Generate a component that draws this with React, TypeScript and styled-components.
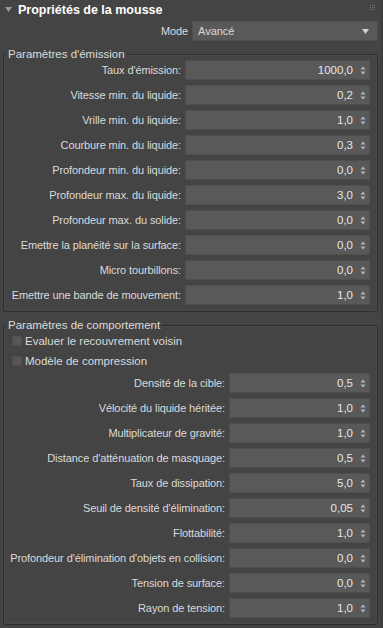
import React from "react";
import styled, { createGlobalStyle } from "styled-components";

const GlobalStyle = createGlobalStyle`
  html, body {
    margin: 0;
    padding: 0;
    background: #444444;
  }
  * {
    box-sizing: border-box;
  }
`;

const emission = [
  { label: "Taux d'émission:", value: "1000,0" },
  { label: "Vitesse min. du liquide:", value: "0,2" },
  { label: "Vrille min. du liquide:", value: "1,0" },
  { label: "Courbure min. du liquide:", value: "0,3" },
  { label: "Profondeur min. du liquide:", value: "0,0" },
  { label: "Profondeur max. du liquide:", value: "3,0" },
  { label: "Profondeur max. du solide:", value: "0,0" },
  { label: "Emettre la planéité sur la surface:", value: "0,0" },
  { label: "Micro tourbillons:", value: "0,0" },
  { label: "Emettre une bande de mouvement:", value: "1,0" },
];

const behaviour = [
  { label: "Densité de la cible:", value: "0,5" },
  { label: "Vélocité du liquide héritée:", value: "1,0" },
  { label: "Multiplicateur de gravité:", value: "1,0" },
  { label: "Distance d'atténuation de masquage:", value: "0,5" },
  { label: "Taux de dissipation:", value: "5,0" },
  { label: "Seuil de densité d'élimination:", value: "0,05" },
  { label: "Flottabilité:", value: "1,0" },
  { label: "Profondeur d'élimination d'objets en collision:", value: "0,0" },
  { label: "Tension de surface:", value: "0,0" },
  { label: "Rayon de tension:", value: "1,0" },
];

const checks = ["Evaluer le recouvrement voisin", "Modèle de compression"];

// petite flèche haut/bas du spinner
const SpinArrows = () => (
  <svg width="6" height="11" viewBox="0 0 6 11">
    <path d="M3 1.5 L5.5 4.5 L0.5 4.5 Z" fill="#b4b4b4" />
    <path d="M3 9.5 L5.5 6.5 L0.5 6.5 Z" fill="#b4b4b4" />
  </svg>
);

const Spinner: React.FC<{ value: string }> = ({ value }) => (
  <Field>
    <Value>{value}</Value>
    <SpinArrows />
  </Field>
);

const App: React.FC = () => {
  return (
    <Panel>
      <GlobalStyle />
      <Header>
        <svg width="7" height="5" viewBox="0 0 7 5">
          <path d="M0 0 L7 0 L3.5 5 Z" fill="#9a9a9a" />
        </svg>
        <Title>Propriétés de la mousse</Title>
        <Grip>
          {Array.from({ length: 9 }).map((_, i) => (
            <i key={i} />
          ))}
        </Grip>
      </Header>

      <ModeRow>
        <Label>Mode</Label>
        <Dropdown>
          <span>Avancé</span>
          <svg width="7" height="5" viewBox="0 0 7 5">
            <path d="M0 0 L7 0 L3.5 5 Z" fill="#d0d0d0" />
          </svg>
        </Dropdown>
      </ModeRow>

      <Group>
        <Legend>Paramètres d'émission</Legend>
        <Rows fieldWidth={185}>
          {emission.map((r) => (
            <React.Fragment key={r.label}>
              <Label>{r.label}</Label>
              <Spinner value={r.value} />
            </React.Fragment>
          ))}
        </Rows>
      </Group>

      <Group>
        <Legend>Paramètres de comportement</Legend>
        <Checks>
          {checks.map((c) => (
            <CheckRow key={c}>
              <Box />
              <span>{c}</span>
            </CheckRow>
          ))}
        </Checks>
        <Rows fieldWidth={141}>
          {behaviour.map((r) => (
            <React.Fragment key={r.label}>
              <Label>{r.label}</Label>
              <Spinner value={r.value} />
            </React.Fragment>
          ))}
        </Rows>
      </Group>
    </Panel>
  );
};

export default App;

// panneau complet
const Panel = styled.div`
  width: 383px;
  height: 628px;
  overflow: hidden;
  background: #444444;
  color: #dadada;
  font-family: "Liberation Sans", Arial, sans-serif;
  font-size: 11px;
  border-right: 2px solid #3c3c3c;
`;

// titre du rollout
const Header = styled.div`
  height: 19px;
  display: flex;
  align-items: center;
  padding-left: 5px;
  padding-right: 6px;
  gap: 6px;
`;

const Title = styled.span`
  font-weight: bold;
  font-size: 12.5px;
  color: #ffffff;
  flex: 1;
`;

const Grip = styled.div`
  display: grid;
  grid-template-columns: repeat(3, 1px);
  gap: 1px;
  margin-top: -5px;

  i {
    width: 1px;
    height: 1px;
    background: #777777;
  }
`;

const ModeRow = styled.div`
  display: flex;
  align-items: center;
  justify-content: flex-end;
  gap: 4px;
  padding-right: 3px;
  margin-top: 2px;
`;

const Label = styled.span`
  text-align: right;
  white-space: nowrap;
  letter-spacing: -0.1px;
  color: #dadada;
`;

const Dropdown = styled.div`
  width: 186px;
  height: 20px;
  background: #595959;
  border: 1px solid #505050;
  display: flex;
  align-items: center;
  justify-content: space-between;
  padding: 0 8px 0 5px;
`;

// boîte de groupe
const Group = styled.fieldset`
  margin: 6px 3px 0 3px;
  padding: 0 7px 6px 6px;
  border: 1px solid #2e2e2e;
  border-radius: 3px;
  box-shadow: inset 0 0 0 1px #4a4a4a;
`;

const Legend = styled.legend`
  padding: 0 2px 0 1px;
  margin-left: -3px;
  line-height: 14px;
  font-size: 11.5px;
  color: #dadada;
`;

const Rows = styled.div<{ fieldWidth: number }>`
  display: grid;
  grid-template-columns: minmax(0, 1fr) ${(p) => p.fieldWidth}px;
  grid-auto-rows: 20px;
  row-gap: 5px;
  column-gap: 4px;
  align-items: center;
  margin-top: -1px;
`;

// champ numérique
const Field = styled.div`
  height: 20px;
  background: #595959;
  border: 1px solid #4f4f4f;
  display: flex;
  align-items: center;
  justify-content: flex-end;
  gap: 7px;
  padding-right: 3px;
`;

const Value = styled.span`
  color: #e6e6e6;
  font-size: 11.5px;
`;

const Checks = styled.div`
  display: flex;
  flex-direction: column;
  gap: 6px;
  padding-top: 2px;
  margin-bottom: 6px;
`;

const CheckRow = styled.div`
  display: flex;
  align-items: center;
  gap: 3px;
  padding-left: 2px;
  height: 14px;
  font-size: 11.5px;
`;

const Box = styled.span`
  width: 10px;
  height: 10px;
  background: #575757;
  border: 1px solid #4d4d4d;
`;
